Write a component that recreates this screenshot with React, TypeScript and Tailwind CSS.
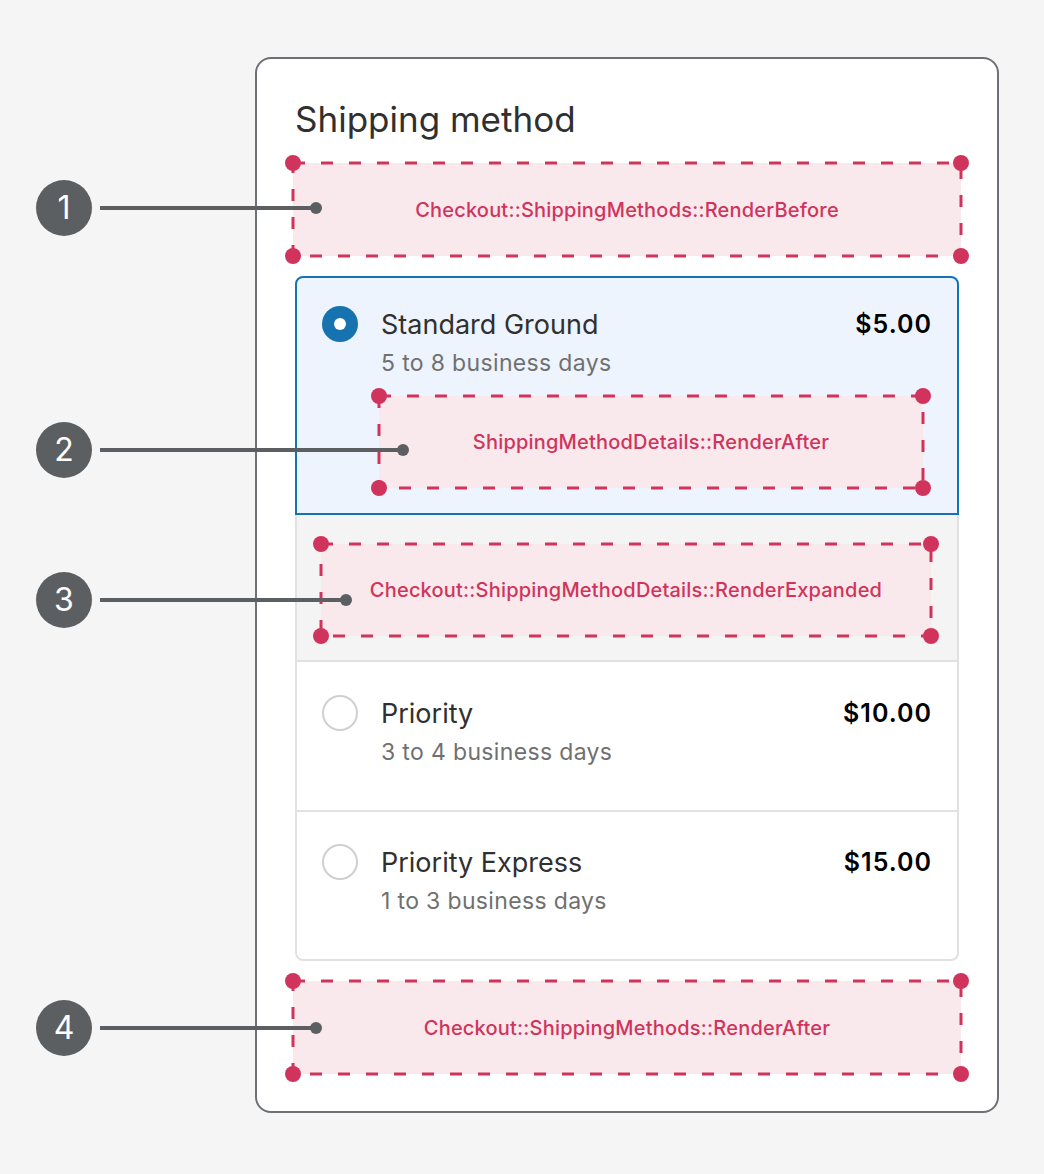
import React from "react";

const font = { fontFamily: "Inter, 'Noto Sans', sans-serif" };

// dashed outline with the corner handles, drawn over the pink target box
function DashedFrame() {
  return (
    <svg className="absolute inset-0 w-full h-full overflow-visible pointer-events-none">
      <rect x="0" y="0" width="100%" height="100%" fill="none" stroke="#d0345c" strokeWidth="3" strokeDasharray="12 16" />
      <circle cx="0" cy="0" r="8" fill="#d0345c" />
      <circle cx="100%" cy="0" r="8" fill="#d0345c" />
      <circle cx="0" cy="100%" r="8" fill="#d0345c" />
      <circle cx="100%" cy="100%" r="8" fill="#d0345c" />
    </svg>
  );
}

function Callout({ n, className }: { n: number; className: string }) {
  return (
    <div className={"absolute flex items-center h-[56px] " + className}>
      <div className="w-[56px] h-[56px] shrink-0 rounded-full bg-[#5c5f62] flex items-center justify-center text-white text-[32px] leading-none">
        {n}
      </div>
      <div className="flex-1 h-[4px] ml-[8px] bg-[#5c5f62]" />
      <div className="w-[12px] h-[12px] -ml-[6px] shrink-0 rounded-full bg-[#5c5f62]" />
    </div>
  );
}

function Target({ label, className, children }: { label: string; className: string; children?: React.ReactNode }) {
  return (
    <div className={"relative bg-[#f9e9ec] flex items-center justify-center " + className}>
      <DashedFrame />
      <span className="text-[20px] font-medium tracking-[0.01em] text-[#d0345c] leading-none">{label}</span>
      {children}
    </div>
  );
}

function Radio({ checked }: { checked?: boolean }) {
  if (checked) {
    return (
      <div className="w-9 h-9 shrink-0 rounded-full bg-[#1773b0] flex items-center justify-center">
        <div className="w-[12px] h-[12px] rounded-full bg-white" />
      </div>
    );
  }
  return <div className="w-9 h-9 shrink-0 rounded-full border-2 border-[#d0d0d0] bg-white" />;
}

function OptionHead({ title, days, price }: { title: string; days: string; price: string }) {
  return (
    <>
      <div className="flex items-center justify-between h-9 pt-[2px]">
        <span className="text-[27px] text-[#303030]">{title}</span>
        <span className="text-[25px] font-semibold tracking-[0.04em] text-black">{price}</span>
      </div>
      <div className="mt-[6px] h-[30px] leading-[30px] text-[23px] tracking-[0.015em] text-[#707070]">{days}</div>
    </>
  );
}

export default function App() {
  return (
    <div className="min-h-[1174px] w-full bg-[#f5f5f5] pt-[57px] pl-[255px]" style={font}>
      <div className="w-[744px] h-[1056px] bg-white border-2 border-[#6d7175] rounded-[16px] pt-[40px] px-[36px] flex flex-col">
        <h2 className="pl-[2px] h-[40px] leading-[40px] text-[35px] text-[#303030]">Shipping method</h2>

        <Target label="Checkout::ShippingMethods::RenderBefore" className="mt-[24px] h-[93px]">
          <Callout n={1} className="left-[-257px] w-[286px] top-[17px]" />
        </Target>

        {/* options list */}
        <div className="mt-[20px] mx-[2px] flex flex-col">
          <div className="h-[239px] border-2 border-[#1773b0] bg-[#edf4fe] rounded-t-[8px] pt-[28px] pl-[25px] pr-[25px] flex gap-[23px]">
            <Radio checked />
            <div className="flex-1 flex flex-col">
              <OptionHead title="Standard Ground" days="5 to 8 business days" price="$5.00" />
              <Target label="ShippingMethodDetails::RenderAfter" className="mt-[18px] -ml-[2px] mr-[9px] h-[92px]">
                <Callout n={2} className="left-[-343px] w-[373px] top-[26px]" />
              </Target>
            </div>
          </div>

          <div className="h-[147px] border-x-2 border-b-2 border-[#e1e1e1] bg-[#f4f4f4] pt-[29px] pl-[24px] pr-[26px]">
            <Target label="Checkout::ShippingMethodDetails::RenderExpanded" className="h-[92px]">
              <Callout n={3} className="left-[-285px] w-[316px] top-[28px]" />
            </Target>
          </div>

          <div className="h-[150px] border-x-2 border-b-2 border-[#e1e1e1] pt-[33px] pl-[25px] pr-[25px] flex gap-[23px]">
            <Radio />
            <div className="flex-1 flex flex-col">
              <OptionHead title="Priority" days="3 to 4 business days" price="$10.00" />
            </div>
          </div>

          <div className="h-[149px] border-x-2 border-b-2 border-[#e1e1e1] rounded-b-[8px] pt-[32px] pl-[25px] pr-[25px] flex gap-[23px]">
            <Radio />
            <div className="flex-1 flex flex-col">
              <OptionHead title="Priority Express" days="1 to 3 business days" price="$15.00" />
            </div>
          </div>
        </div>

        <Target label="Checkout::ShippingMethods::RenderAfter" className="mt-[20px] h-[93px]">
          <Callout n={4} className="left-[-257px] w-[286px] top-[19px]" />
        </Target>
      </div>
    </div>
  );
}
